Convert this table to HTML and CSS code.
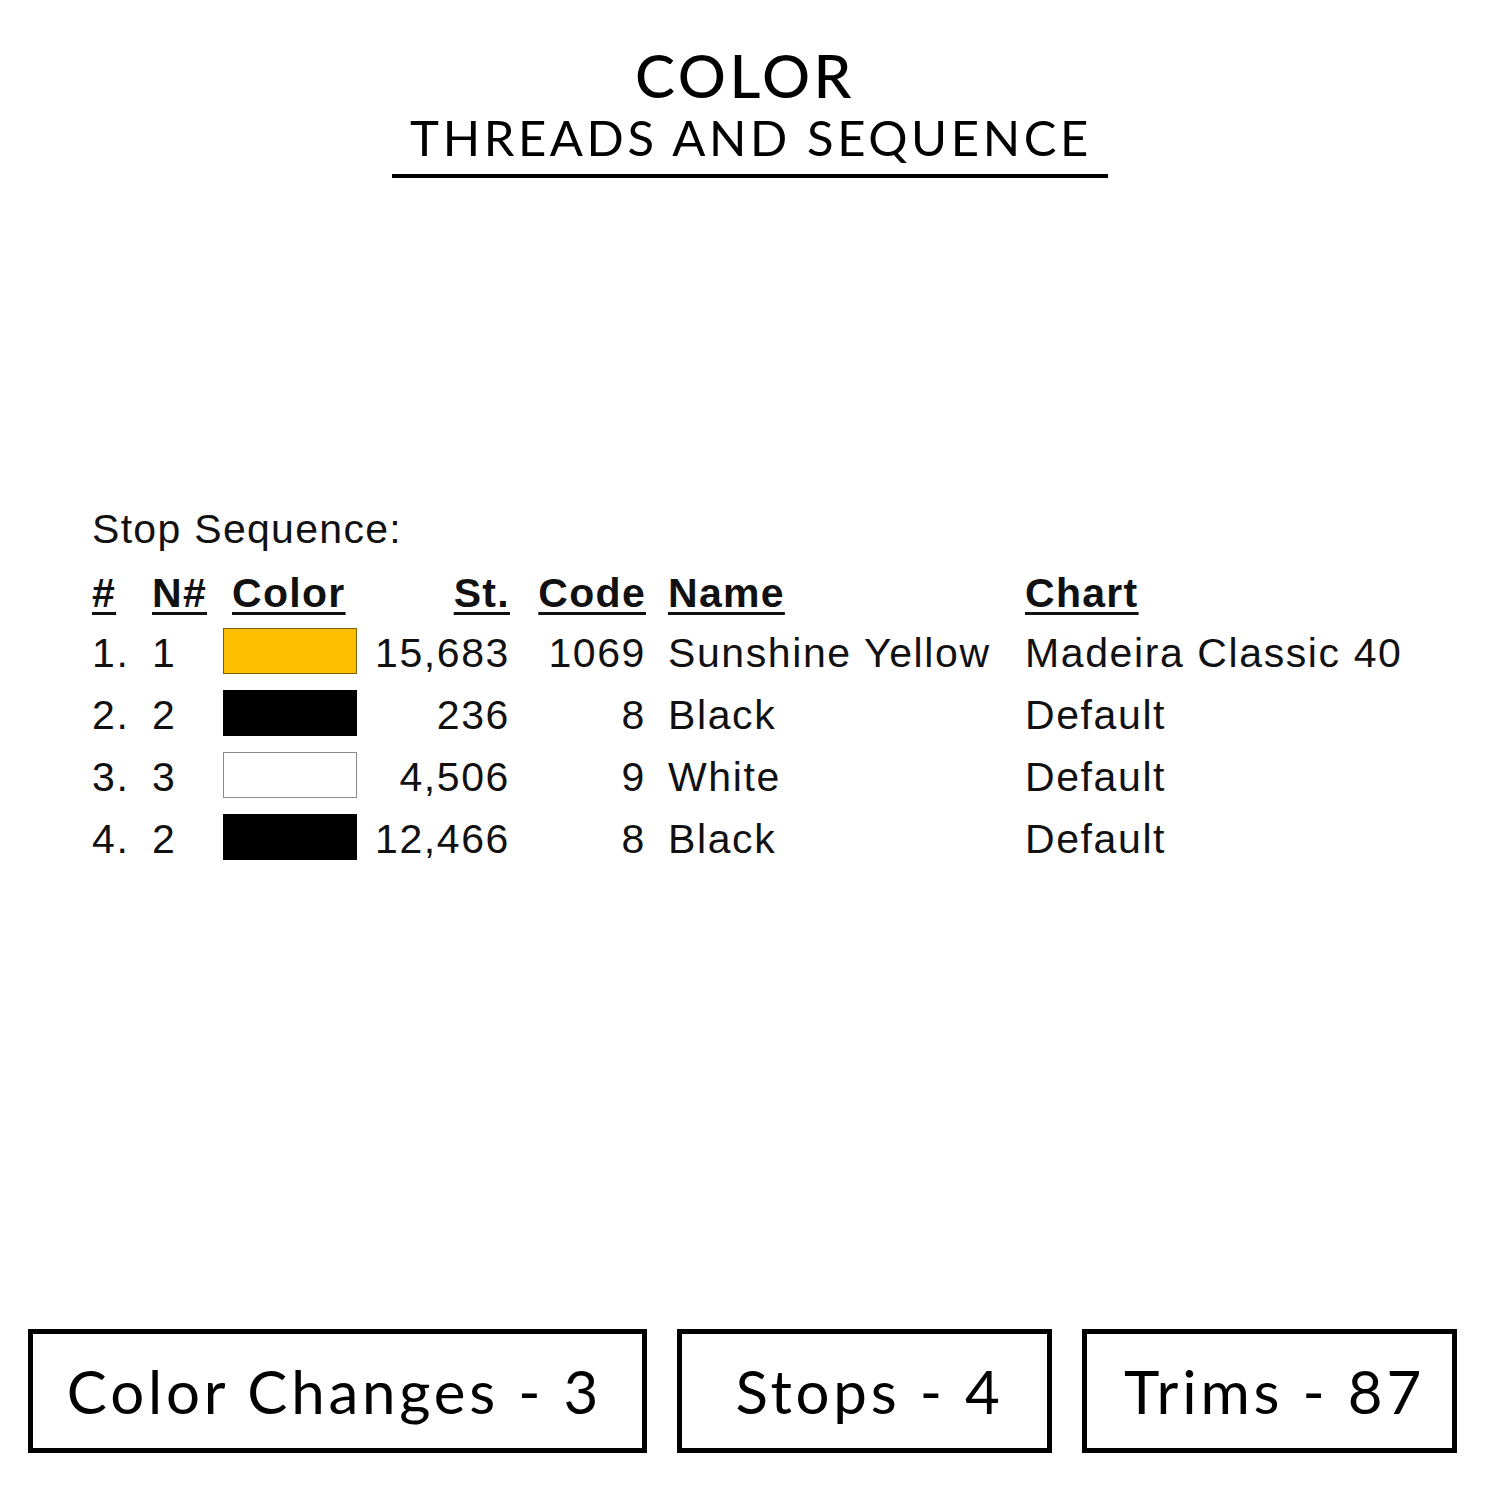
FILE: index.html
```html
<!DOCTYPE html>
<html lang="en">
<head>
<meta charset="utf-8">
<title>Color – Threads and Sequence</title>
<link rel="stylesheet" href="styles.css">
</head>
<body>
<div class="page">
  <header class="title-block">
    <h1 class="title">COLOR</h1>
    <h2 class="subtitle">THREADS AND SEQUENCE</h2>
  </header>

  <section class="sequence">
    <div class="seq-label">Stop Sequence:</div>
    <div class="seq-grid">
      <div class="hd">#</div>
      <div class="hd">N#</div>
      <div class="hd hd-color">Color</div>
      <div class="hd num">St.</div>
      <div class="hd num">Code</div>
      <div class="hd name">Name</div>
      <div class="hd">Chart</div>

      <div>1.</div>
      <div>1</div>
      <div><span class="swatch swatch-yellow"></span></div>
      <div class="num">15,683</div>
      <div class="num">1069</div>
      <div class="name">Sunshine Yellow</div>
      <div>Madeira Classic 40</div>

      <div>2.</div>
      <div>2</div>
      <div><span class="swatch swatch-black"></span></div>
      <div class="num">236</div>
      <div class="num">8</div>
      <div class="name">Black</div>
      <div>Default</div>

      <div>3.</div>
      <div>3</div>
      <div><span class="swatch swatch-white"></span></div>
      <div class="num">4,506</div>
      <div class="num">9</div>
      <div class="name">White</div>
      <div>Default</div>

      <div>4.</div>
      <div>2</div>
      <div><span class="swatch swatch-black"></span></div>
      <div class="num">12,466</div>
      <div class="num">8</div>
      <div class="name">Black</div>
      <div>Default</div>
    </div>
  </section>

  <footer class="stats">
    <div class="stat stat-wide">Color Changes - 3</div>
    <div class="stat stat-narrow">Stops - 4</div>
    <div class="stat stat-narrow">Trims - 87</div>
  </footer>
</div>
</body>
</html>
```

FILE: styles.css
```css
* { box-sizing: border-box; }

html, body {
  margin: 0;
  padding: 0;
  background: #ffffff;
  color: #000000;
}

.page {
  width: 1500px;
  height: 1500px;
  display: flex;
  flex-direction: column;
  padding-top: 45px;
}

.title-block {
  width: 716px;
  margin: 0 auto;
  text-align: center;
  border-bottom: 4px solid #000;
  padding-bottom: 12px;
  font-family: "Lato", "Open Sans", sans-serif;
}

.title {
  margin: 0;
  font-size: 60px;
  line-height: 60px;
  font-weight: 500;
  letter-spacing: 3.5px;
  padding-right: 10px;
}

.subtitle {
  margin: 8px 0 0 0;
  font-size: 49px;
  line-height: 49px;
  font-weight: 400;
  letter-spacing: 3.6px;
  padding-left: 2px;
}

.sequence {
  margin-top: 320px;
  padding-left: 92px;
  font-family: "Liberation Sans", Arial, sans-serif;
  font-size: 41px;
  letter-spacing: 1.6px;
  color: #111;
}

.seq-label {
  line-height: 62px;
  margin-bottom: 2px;
  letter-spacing: 1.3px;
}

.seq-grid {
  display: grid;
  grid-template-columns: 60px 71px 134px 151px 136px 381px auto;
  grid-template-rows: 60px repeat(4, 62px);
  line-height: 62px;
  white-space: nowrap;
}

.hd {
  font-weight: 700;
  letter-spacing: 1.3px;
  text-decoration: underline;
  text-decoration-thickness: 3px;
  text-underline-offset: 5px;
}

.hd-color { padding-left: 9px; }

.num {
  text-align: right;
  margin-right: -2px;
}

.name { padding-left: 24px; }

.swatch {
  display: block;
  width: 134px;
  height: 46px;
  margin-top: 6px;
  border: 1.5px solid #000;
}

.swatch-yellow { background: #fbbf00; border-color: #7d6000; }
.swatch-black { background: #000; border-color: #000; }
.swatch-white { background: #fff; border-color: #8a8a8a; }

.stats {
  margin-top: auto;
  margin-bottom: 47px;
  padding-left: 28px;
  display: flex;
  gap: 30px;
  font-family: "Lato", "Open Sans", sans-serif;
}

.stat {
  width: 375px;
  height: 124px;
  border: 5px solid #000;
  display: flex;
  align-items: center;
  justify-content: center;
  font-size: 60px;
  letter-spacing: 3.8px;
}

.stat-wide {
  width: 619px;
  padding-right: 6px;
}

.stat-narrow {
  padding-left: 10px;
}
```
